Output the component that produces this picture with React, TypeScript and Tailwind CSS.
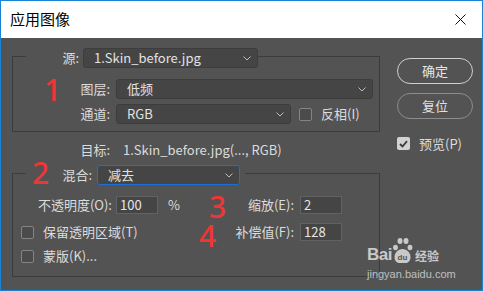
import React from "react";

const LINE = "border-[#3c3c3c]";

function Chevron() {
  return (
    <svg width="8" height="5" viewBox="0 0 8 5" className="shrink-0">
      <path d="M0.5 0.5 L4 4 L7.5 0.5" stroke="#bdbdbd" fill="none" strokeWidth="1" />
    </svg>
  );
}

function Select({ text, className = "", focus = false }: { text: string; className?: string; focus?: boolean }) {
  return (
    <div
      className={`h-[20px] flex items-center justify-between rounded-[3px] bg-[#454545] pl-[10px] pr-[6px] text-[#e2e2e2] ${
        focus ? "border-[1.5px] border-[#1c6fd8]" : "border border-[#3d3d3d]"
      } ${className}`}
    >
      <span className="whitespace-nowrap leading-[18px]">{text}</span>
      <Chevron />
    </div>
  );
}

function Input({ value }: { value: string }) {
  return (
    <div className="w-[42px] h-[18px] bg-[#454545] border border-[#626262] pl-[3px] flex items-center text-[#e6e6e6] leading-[16px]">
      {value}
    </div>
  );
}

function Box({ checked = false }: { checked?: boolean }) {
  if (checked) {
    return (
      <div className="w-[13px] h-[13px] rounded-[2px] bg-[#d2d2d2] flex items-center justify-center shrink-0">
        <svg width="9" height="8" viewBox="0 0 9 8">
          <path d="M1 4 L3.5 6.5 L8 1.2" stroke="#3a3a3a" strokeWidth="1.8" fill="none" />
        </svg>
      </div>
    );
  }
  return <div className="w-[13px] h-[13px] rounded-[2px] border border-[#858585] bg-[#4b4b4b] shrink-0" />;
}

function Paw() {
  return (
    <svg width="21" height="27" viewBox="0 0 21 27" className="shrink-0">
      <g fill="rgba(235,235,235,0.78)">
        <ellipse cx="3.5" cy="10.5" rx="2.4" ry="2.8" />
        <ellipse cx="8" cy="4" rx="2.5" ry="3" />
        <ellipse cx="14" cy="4" rx="2.5" ry="3" />
        <ellipse cx="18" cy="10.5" rx="2.4" ry="2.8" />
        <path d="M10.5 12 C6 12 2.5 16 2.5 20 C2.5 24 5 26 8 26 L13 26 C16 26 18.5 24 18.5 20 C18.5 16 15 12 10.5 12 Z" />
      </g>
      <text x="10.5" y="23" textAnchor="middle" fontSize="8" fontWeight="700" fill="#555" fontFamily="Liberation Sans, sans-serif">
        du
      </text>
    </svg>
  );
}

export default function App() {
  return (
    <div className="relative w-[483px] h-[291px] border border-[#1883d7] flex flex-col font-['Noto_Sans_CJK_SC','Noto_Sans',sans-serif] text-[13px] overflow-hidden">
      {/* Title bar */}
      <div className="h-[37px] bg-white flex items-center justify-between pl-[9px] pr-[16px] shrink-0">
        <span className="text-[15px] text-black leading-[20px] -mt-[1px]">应用图像</span>
        <svg width="11" height="11" viewBox="0 0 11 11" className="-mt-[1px]">
          <path d="M0.5 0.5 L10.5 10.5 M10.5 0.5 L0.5 10.5" stroke="#111" strokeWidth="1" />
        </svg>
      </div>

      {/* Body */}
      <div className="flex-1 bg-[#535353] flex pl-[11px] pt-[10px] text-[#dcdcdc]">
        {/* Left column */}
        <div className="w-[368px] flex flex-col">
          {/* Group 1 legend */}
          <div className="flex items-end h-[20px]">
            <div className={`w-[14px] h-[12px] border-l border-t ${LINE}`} />
            <div className="flex items-center">
              <span className="w-[53px] text-right leading-[18px]">源:</span>
              <Select text="1.Skin_before.jpg" className="ml-[4px] w-[175px]" />
            </div>
            <div className={`flex-1 h-[12px] border-t border-r ${LINE}`} />
          </div>
          {/* Group 1 content */}
          <div className={`border-x border-b ${LINE} pt-[11px] pb-[7px] pr-[6px] flex flex-col`}>
            <div className="h-[20px] flex items-center">
              <span className="w-[97px] text-right leading-[18px]">图层:</span>
              <Select text="低频" className="ml-[6px] flex-1" />
            </div>
            <div className="mt-[5px] h-[20px] flex items-center">
              <span className="w-[97px] text-right leading-[18px]">通道:</span>
              <Select text="RGB" className="ml-[6px] w-[175px]" />
              <div className="ml-[8px]">
                <Box />
              </div>
              <span className="ml-[9px] leading-[18px]">反相(I)</span>
            </div>
          </div>

          {/* Target row */}
          <div className="mt-[9px] h-[18px] flex items-center">
            <span className="w-[98px] text-right leading-[18px]">目标:</span>
            <span className="ml-[13px] leading-[18px] whitespace-nowrap">1.Skin_before.jpg(..., RGB)</span>
          </div>

          {/* Group 2 legend */}
          <div className="mt-[6px] flex items-end h-[20px]">
            <div className={`w-[14px] h-[12px] border-l border-t ${LINE}`} />
            <div className="flex items-center pr-[5px]">
              <span className="w-[66px] text-right leading-[18px]">混合:</span>
              <Select text="减去" focus className="ml-[5px] w-[143px]" />
            </div>
            <div className={`flex-1 h-[12px] border-t border-r ${LINE}`} />
          </div>
          {/* Group 2 content */}
          <div className={`border-x border-b ${LINE} pt-[11px] pb-[11px] pr-[37px] flex flex-col`}>
            <div className="h-[18px] flex items-center">
              <span className="w-[99px] text-right leading-[18px]">不透明度(O):</span>
              <div className="ml-[4px]">
                <Input value="100" />
              </div>
              <span className="ml-[10px] leading-[18px]">%</span>
              <div className="ml-auto flex items-center">
                <span className="leading-[18px]">缩放(E):</span>
                <div className="ml-[6px]">
                  <Input value="2" />
                </div>
              </div>
            </div>
            <div className="mt-[9px] h-[18px] flex items-center">
              <div className="ml-[8px]">
                <Box />
              </div>
              <span className="ml-[9px] leading-[18px]">保留透明区域(T)</span>
              <div className="ml-auto flex items-center">
                <span className="leading-[18px]">补偿值(F):</span>
                <div className="ml-[6px]">
                  <Input value="128" />
                </div>
              </div>
            </div>
            <div className="mt-[6px] h-[18px] flex items-center">
              <div className="ml-[8px]">
                <Box />
              </div>
              <span className="ml-[9px] leading-[18px]">蒙版(K)...</span>
            </div>
          </div>
        </div>

        {/* Right column */}
        <div className="ml-[17px] w-[76px] flex flex-col">
          <button className="mt-[10px] h-[26px] w-[76px] rounded-full border-[1.5px] border-[#cfcfcf] text-[#e6e6e6] leading-[18px]">
            确定
          </button>
          <button className="mt-[9px] h-[26px] w-[76px] rounded-full border border-[#8d8d8d] text-[#e0e0e0] leading-[18px]">
            复位
          </button>
          <div className="mt-[18px] h-[13px] flex items-center">
            <Box checked />
            <span className="ml-[9px] leading-[18px] whitespace-nowrap">预览(P)</span>
          </div>
        </div>
      </div>

      {/* Red annotation numbers */}
      <span className="absolute left-[43px] top-[78px] text-[30px] leading-[22px] text-[#ef3636] font-medium font-['Noto_Sans',sans-serif]">1</span>
      <span className="absolute left-[31px] top-[161px] text-[30px] leading-[22px] text-[#ef3636] font-medium font-['Noto_Sans',sans-serif]">2</span>
      <span className="absolute left-[208px] top-[195px] text-[30px] leading-[22px] text-[#ef3636] font-medium font-['Noto_Sans',sans-serif]">3</span>
      <span className="absolute left-[198px] top-[224px] text-[30px] leading-[22px] text-[#ef3636] font-medium font-['Noto_Sans',sans-serif]">4</span>

      {/* Watermark */}
      <div className="absolute left-[366px] top-[236px] flex flex-col items-start pointer-events-none">
        <div className="flex items-end h-[27px]">
          <span className="text-[17px] font-bold leading-[18px] text-[rgba(235,235,235,0.78)] font-['Liberation_Sans',sans-serif] tracking-[-0.5px]">Bai</span>
          <Paw />
          <span className="ml-[2px] text-[12px] font-bold leading-[16px] text-[rgba(235,235,235,0.78)]">经验</span>
        </div>
        <span className="mt-[4px] text-[11px] leading-[12px] text-[rgba(235,235,235,0.72)] font-['Liberation_Sans',sans-serif]">jingyan.baidu.com</span>
      </div>
    </div>
  );
}
